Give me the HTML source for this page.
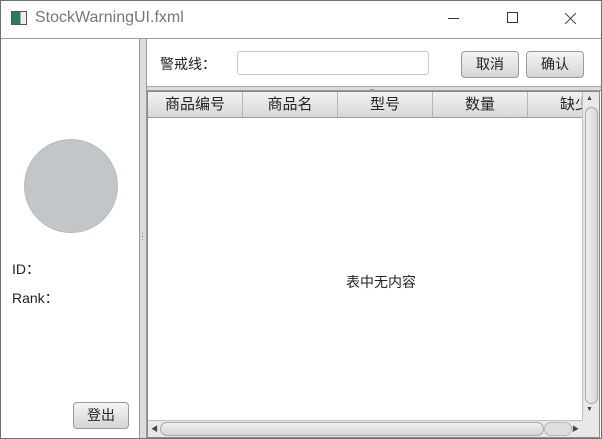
<!DOCTYPE html><html><head><meta charset="utf-8"><style>
*{margin:0;padding:0;box-sizing:border-box}
body{width:602px;height:439px;overflow:hidden;background:#fff;font-family:"Liberation Sans","Noto Sans CJK SC",sans-serif;position:relative}
.a{position:absolute}
.c{font-family:"Noto Sans CJK SC",sans-serif}
.btn{position:absolute;border:1px solid #9a9a9a;border-radius:4px;background:linear-gradient(#f4f4f4,#d6d6d6);font-size:14px;color:#222;text-align:center}
.th{position:absolute;top:0;height:25px;border-right:1px solid #b5b5b5;font-size:15px;color:#222;text-align:center;line-height:25px;background:linear-gradient(#f2f2f2,#d8d8d8)}
</style></head><body>
<div class="a" style="left:0;top:0;width:602px;height:439px;border:1px solid #707070"></div>
<div class="a" style="left:11px;top:11px;width:16px;height:14px;border:1px solid #555;background:linear-gradient(90deg,#2a7a6a 60%,#eee 60%)"></div>
<div class="a" style="left:35px;top:9px;font-size:16px;color:#777">StockWarningUI.fxml</div>
<div class="a" style="left:448px;top:18px;width:11px;height:1px;background:#333"></div>
<div class="a" style="left:507px;top:12px;width:11px;height:11px;border:1px solid #333"></div>
<div class="a" style="left:563px;top:18px;width:15px;height:1px;background:#333;transform:rotate(45deg)"></div>
<div class="a" style="left:563px;top:18px;width:15px;height:1px;background:#333;transform:rotate(-45deg)"></div>
<div class="a" style="left:1px;top:38px;width:600px;height:1px;background:#999"></div>
<div class="a" style="left:24px;top:139px;width:94px;height:94px;border-radius:50%;background:#c3c6c9;border:1px solid #b8bbbe"></div>
<div class="a" style="left:12px;top:259px;font-size:14px;color:#222">ID<span class="c">：</span></div>
<div class="a" style="left:12px;top:288px;font-size:14px;color:#222">Rank<span class="c">：</span></div>
<div class="btn" style="left:73px;top:402px;width:56px;height:27px;line-height:25px">登出</div>
<div class="a" style="left:139px;top:39px;width:8px;height:399px;background:#dcdcdc;border-left:1px solid #999;border-right:1px solid #999"></div>
<div class="a" style="left:141px;top:232px;font-size:8px;color:#555;line-height:3px">·<br>·<br>·</div>
<div class="a c" style="left:160px;top:54px;font-size:14px;color:#222">警戒线：</div>
<div class="a" style="left:237px;top:51px;width:192px;height:24px;border:1px solid #c8c8c8;border-radius:3px"></div>
<div class="btn" style="left:461px;top:51px;width:58px;height:27px;line-height:25px">取消</div>
<div class="btn" style="left:526px;top:51px;width:58px;height:27px;line-height:25px">确认</div>
<div class="a" style="left:147px;top:86px;width:454px;height:5px;background:#dcdcdc;border-top:1px solid #aaa;border-bottom:1px solid #999"></div>
<div class="a" style="left:369px;top:85px;font-size:8px;color:#555;letter-spacing:-1px">···</div>
<div class="a" style="left:147px;top:91px;width:453px;height:347px;border:1px solid #8a8a8a;overflow:hidden">
<div class="a" style="left:0;top:0;width:452px;height:26px;border-bottom:1px solid #999;overflow:hidden">
<div class="th" style="left:0;width:95px">商品编号</div>
<div class="th" style="left:95px;width:95px">商品名</div>
<div class="th" style="left:190px;width:95px">型号</div>
<div class="th" style="left:285px;width:95px">数量</div>
<div class="th" style="left:380px;width:95px">缺少</div>
</div>
<div class="a" style="left:198px;top:180px;font-size:14px;color:#222">表中无内容</div>
<div class="a" style="left:434px;top:0;width:18px;height:328px;background:#e8e8e8;border-left:1px solid #c0c0c0"></div>
<div class="a" style="left:438px;top:3px;font-size:7px;color:#444">▲</div>
<div class="a" style="left:437px;top:15px;width:13px;height:297px;border:1px solid #a8a8a8;border-radius:7px;background:linear-gradient(90deg,#eee,#d8d8d8)"></div>
<div class="a" style="left:438px;top:314px;font-size:7px;color:#444">▼</div>
<div class="a" style="left:0;top:328px;width:452px;height:18px;background:#e8e8e8;border-top:1px solid #c0c0c0"></div>
<div class="a" style="left:3px;top:332px;font-size:7px;color:#444">◀</div>
<div class="a" style="left:12px;top:330px;width:384px;height:14px;border:1px solid #a8a8a8;border-radius:7px;background:linear-gradient(#f2f2f2,#d5d5d5)"></div>
<div class="a" style="left:396px;top:330px;width:28px;height:14px;border:1px solid #b8b8b8;border-radius:7px;background:#dedede"></div>
<div class="a" style="left:424px;top:332px;font-size:7px;color:#444">▶</div>
<div class="a" style="left:434px;top:328px;width:18px;height:18px;background:#e8e8e8"></div>
</div>
</body></html>
